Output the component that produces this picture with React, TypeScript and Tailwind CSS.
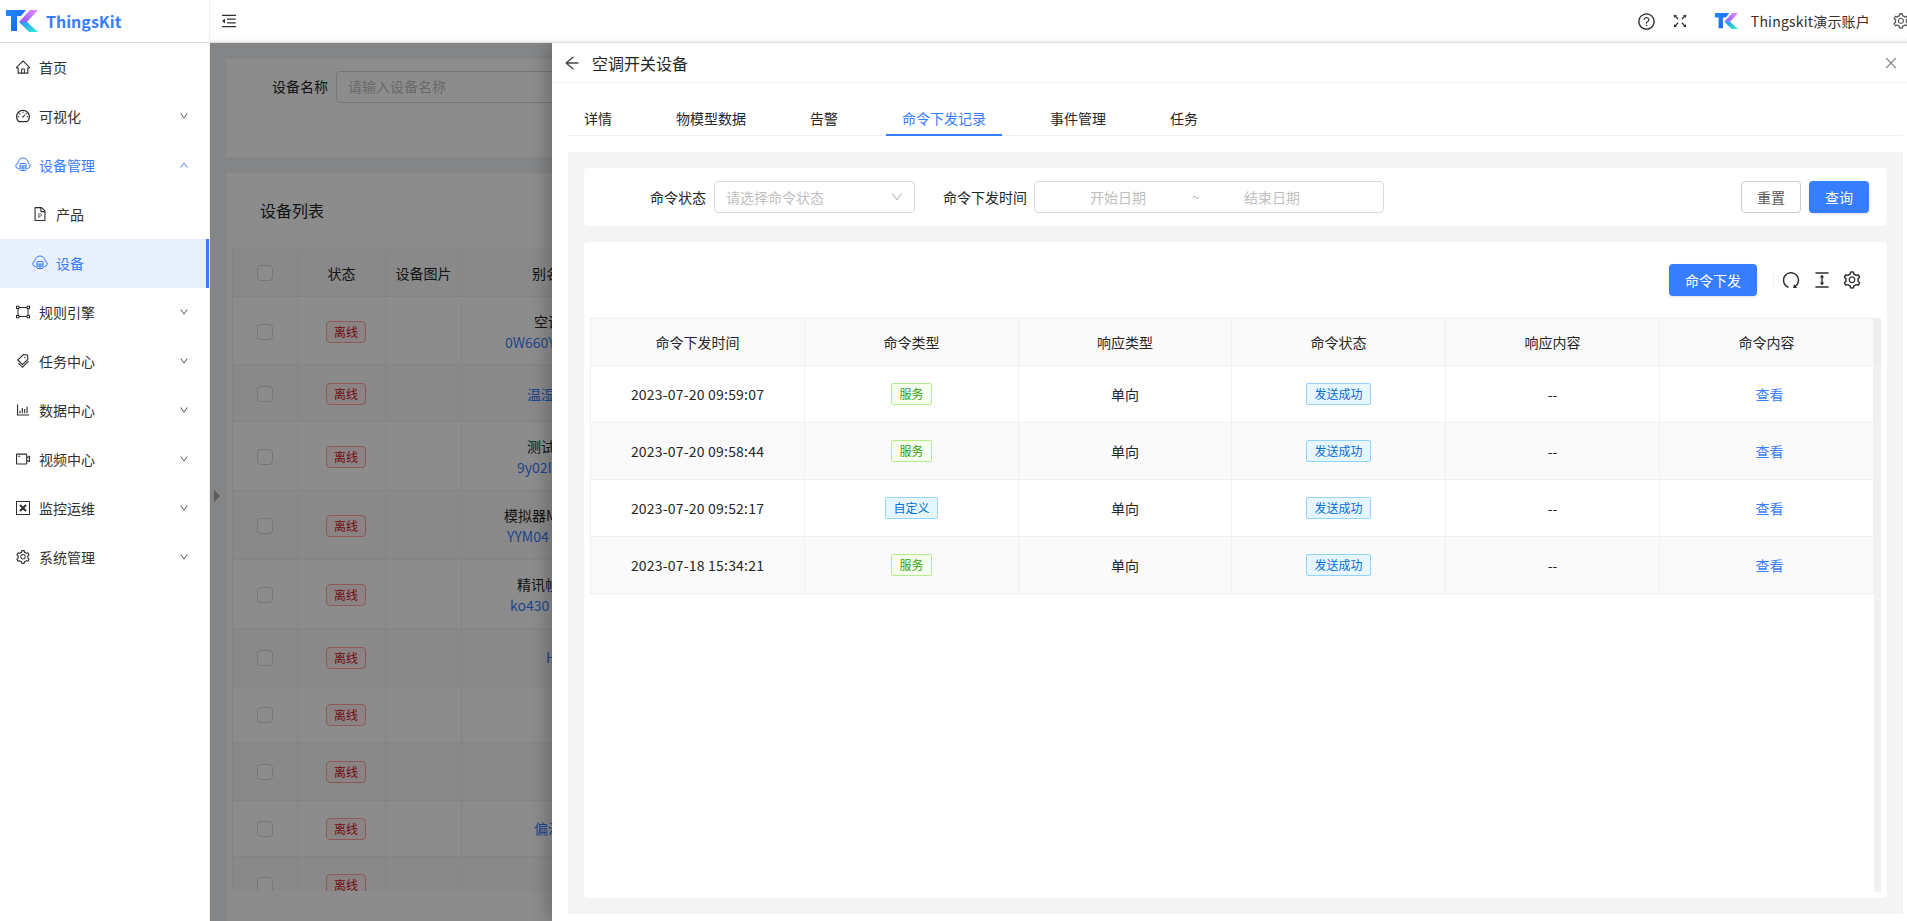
// App.tsx
import React from 'react';
import {
  AiOutlineArrowLeft,
  AiOutlineBarChart,
  AiOutlineClose,
  AiOutlineColumnHeight,
  AiOutlineDashboard,
  AiOutlineDown,
  AiOutlineFilePpt,
  AiOutlineFullscreen,
  AiOutlineHome,
  AiOutlineMenuFold,
  AiOutlineQuestionCircle,
  AiOutlineReload,
  AiOutlineSetting,
  AiOutlineTags,
  AiOutlineUp,
  AiOutlineVideoCamera,
} from 'react-icons/ai';

const Logo = ({ className }: { className: string }) => (
  <svg viewBox="0 0 32 22" className={className}>
    <defs>
      <linearGradient id="tkBlue" x1="0" y1="0" x2="1" y2="1">
        <stop offset="0" stopColor="#1f8bff" />
        <stop offset="1" stopColor="#1a5cff" />
      </linearGradient>
      <linearGradient id="tkPurple" x1="1" y1="0" x2="0" y2="1">
        <stop offset="0" stopColor="#e58cff" />
        <stop offset="1" stopColor="#8a5cff" />
      </linearGradient>
      <linearGradient id="tkTeal" x1="0" y1="0" x2="1" y2="1">
        <stop offset="0" stopColor="#2f8cff" />
        <stop offset="1" stopColor="#2ff0d0" />
      </linearGradient>
    </defs>
    <path d="M0 0H20L15 6H11V21H5V6H0Z" fill="url(#tkBlue)" />
    <path d="M24 0H32L21 12H13Z" fill="url(#tkPurple)" />
    <path d="M13 12H21L32 22H23Z" fill="url(#tkTeal)" />
  </svg>
);

const CloudDevice = ({ className }: { className: string }) => (
  <svg viewBox="0 0 16 16" fill="none" stroke="currentColor" strokeWidth="1" className={className}>
    <path d="M4 11.5H3.2A2.7 2.7 0 0 1 2.8 6.2 5.2 5.2 0 0 1 13.2 6.2 2.7 2.7 0 0 1 12.8 11.5H12" />
    <rect x="5" y="6.5" width="6" height="7" rx="0.6" />
    <path d="M5 9H11M5 11H11M8 9V13.5" />
  </svg>
);

const RuleIcon = ({ className }: { className: string }) => (
  <svg viewBox="0 0 16 16" fill="none" stroke="currentColor" strokeWidth="1" className={className}>
    <path d="M3 3.5H13M3 12.5H13M3 3.5V12.5M13 3.5V12.5" />
    <rect x="1.5" y="2.2" width="2.4" height="2.4" fill="white" />
    <rect x="12.1" y="2.2" width="2.4" height="2.4" fill="white" />
    <rect x="1.5" y="11.4" width="2.4" height="2.4" fill="white" />
    <rect x="12.1" y="11.4" width="2.4" height="2.4" fill="white" />
  </svg>
);

const MonitorIcon = ({ className }: { className: string }) => (
  <svg viewBox="0 0 16 16" fill="none" stroke="currentColor" className={className}>
    <rect x="1.5" y="1.5" width="13" height="13" strokeWidth="1" />
    <path d="M5 5L11 11M11 5L5 11" strokeWidth="2" />
  </svg>
);

const menu = [
  { label: '首页', icon: <AiOutlineHome className="w-4 h-4" /> },
  { label: '可视化', icon: <AiOutlineDashboard className="w-4 h-4" />, arrow: true },
  {
    label: '设备管理',
    icon: <CloudDevice className="w-4 h-4" />,
    arrow: true,
    open: true,
  },
  { label: '产品', icon: <AiOutlineFilePpt className="w-4 h-4" />, sub: true },
  { label: '设备', icon: <CloudDevice className="w-4 h-4" />, sub: true, active: true },
  { label: '规则引擎', icon: <RuleIcon className="w-4 h-4" />, arrow: true },
  { label: '任务中心', icon: <AiOutlineTags className="w-4 h-4" />, arrow: true },
  { label: '数据中心', icon: <AiOutlineBarChart className="w-4 h-4" />, arrow: true },
  { label: '视频中心', icon: <AiOutlineVideoCamera className="w-4 h-4" />, arrow: true },
  { label: '监控运维', icon: <MonitorIcon className="w-4 h-4" />, arrow: true },
  { label: '系统管理', icon: <AiOutlineSetting className="w-4 h-4" />, arrow: true },
];

const Sidebar = () => (
  <aside className="w-[210px] shrink-0 flex flex-col bg-white border-r border-[#eeeeee]">
    <div className="h-[43px] flex items-center pl-[6px] gap-2 border-b border-[#dddddd]">
      <Logo className="w-[32px] h-[22px]" />
      <span className="text-base font-bold text-[#377dff]">ThingsKit</span>
    </div>
    {menu.map((m) => (
      <div
        key={m.label}
        className={
          'h-[49px] pb-[2px] flex items-center text-sm ' +
          (m.sub ? 'pl-[32px] gap-[8px] ' : 'pl-[15px] gap-[8px] ') +
          (m.active ? 'bg-[#e8f0fe] border-r-[3px] border-[#377dff] ' : '') +
          (m.active || m.open ? 'text-[#377dff]' : 'text-[#303030]')
        }
      >
        {m.icon}
        <span>{m.label}</span>
        {m.arrow && (
          <span className="ml-auto mr-[20px]">
            {m.open ? <AiOutlineUp className="w-[10px] h-[10px]" /> : <AiOutlineDown className="w-[10px] h-[10px]" />}
          </span>
        )}
      </div>
    ))}
  </aside>
);

const Header = () => (
  <header className="h-[43px] shrink-0 flex items-center bg-white border-b border-[#dddddd] shadow-[inset_0_-4px_4px_-4px_rgba(0,0,0,0.15)] text-[#303030]">
    <AiOutlineMenuFold className="ml-[10px] w-[18px] h-[18px]" />
    <AiOutlineQuestionCircle className="ml-auto w-[19px] h-[19px]" />
    <AiOutlineFullscreen className="ml-[15px] w-[18px] h-[18px]" />
    <Logo className="ml-[26px] w-[23px] h-[16px]" />
    <span className="ml-[13px] text-sm tracking-[0.2px]">Thingskit演示账户</span>
    <AiOutlineSetting className="ml-[22px] -mr-[3px] w-[18px] h-[18px] shrink-0 text-[#555555]" />
  </header>
);

const bgRows = [
  { h: 'h-[68px] pt-[2px]', top: '空调', pad: 'pl-[72px]', code: '0W660Y', codePad: 'pl-[43px]' },
  { h: 'h-[57px] pt-[2px]', code: '温湿', codePad: 'pl-[65px]' },
  { h: 'h-[69px] pt-[2px]', top: '测试', pad: 'pl-[65px]', code: '9y02I', codePad: 'pl-[55px]' },
  { h: 'h-[69px] pt-[2px]', top: '模拟器M', pad: 'pl-[42px]', code: 'YYM04', codePad: 'pl-[45px]' },
  { h: 'h-[69px] pt-[2px]', top: '精讯帧', pad: 'pl-[55px]', code: 'ko430', codePad: 'pl-[48px]' },
  { h: 'h-[58px]', code: 'H', codePad: 'pl-[84px]' },
  { h: 'h-[56px]' },
  { h: 'h-[58px]' },
  { h: 'h-[56px]', code: '偏温', codePad: 'pl-[72px]' },
  { h: 'h-[56px]' },
];

const Checkbox = () => <span className="w-4 h-4 rounded-sm border border-[#d9d9d9] bg-white" />;

const DeviceBackground = () => (
  <div className="h-full flex flex-col pl-4 pt-4 gap-4 text-sm text-[#262626]">
    <div className="h-[98px] shrink-0 bg-white flex items-start pt-3 pl-[46px]">
      <span className="leading-[31px]">设备名称</span>
      <div className="ml-2 w-[400px] h-8 border border-[#d9d9d9] rounded-sm pl-[11px] leading-[29px] text-[#bfbfbf]">
        请输入设备名称
      </div>
    </div>
    <div className="flex-1 bg-white pl-[6px] min-h-0">
      <div className="h-[76px] pl-[28px] pt-[25px] text-base leading-6">设备列表</div>
      <div className="h-[642px] overflow-hidden border-l border-t border-[#f0f0f0]">
        <div className="h-[47px] flex bg-[#fafafa] border-b border-[#f0f0f0]">
          <div className="w-[65px] flex items-center justify-center border-r border-[#f0f0f0]">
            <Checkbox />
          </div>
          <div className="w-[88px] flex items-center justify-center border-r border-[#f0f0f0]">状态</div>
          <div className="w-[76px] flex items-center justify-center border-r border-[#f0f0f0]">设备图片</div>
          <div className="w-[100px] flex items-center pl-[70px] whitespace-nowrap">别名</div>
        </div>
        {bgRows.map((r, i) => (
          <div key={i} className={'flex border-b border-[#f0f0f0] ' + r.h + (i % 2 ? ' bg-[#fafafa]' : ' bg-white')}>
            <div className="w-[65px] flex items-center justify-center border-r border-[#f0f0f0]">
              <Checkbox />
            </div>
            <div className="w-[88px] flex items-center justify-center pl-[9px] border-r border-[#f0f0f0]">
              <span className="w-10 h-[22px] rounded-sm border border-[#ffa39e] bg-[#fff1f0] text-[#cf1322] text-xs flex items-center justify-center">
                离线
              </span>
            </div>
            <div className="w-[76px] border-r border-[#f0f0f0]" />
            <div className="w-[200px] flex flex-col justify-center leading-[21px] whitespace-nowrap">
              {r.top && <div className={r.pad}>{r.top}</div>}
              {r.code && <div className={r.codePad + ' text-[#377dff]'}>{r.code}</div>}
            </div>
          </div>
        ))}
      </div>
    </div>
  </div>
);

const tabs = ['详情', '物模型数据', '告警', '命令下发记录', '事件管理', '任务'];

const records = [
  { time: '2023-07-20 09:59:07', type: '服务' },
  { time: '2023-07-20 09:58:44', type: '服务' },
  { time: '2023-07-20 09:52:17', type: '自定义' },
  { time: '2023-07-18 15:34:21', type: '服务' },
];

const columns = ['命令下发时间', '命令类型', '响应类型', '命令状态', '响应内容', '命令内容'];

const Tag = ({ text, green }: { text: string; green?: boolean }) => (
  <span
    className={
      'h-[22px] px-[7px] rounded-[2px] border text-xs flex items-center ' +
      (green ? 'border-[#b7eb8f] bg-[#f6ffed] text-[#389e0d]' : 'border-[#91d5ff] bg-[#e6f7ff] text-[#096dd9]')
    }
  >
    {text}
  </span>
);

const cell = 'flex items-center justify-center border-r border-[#f0f0f0]';

const Drawer = () => (
  <section className="absolute right-0 top-0 bottom-0 w-[1355px] flex flex-col bg-white shadow-[-6px_0_16px_rgba(0,0,0,0.2)] text-sm text-[#262626]">
    <div className="h-[40px] shrink-0 flex items-center border-b border-[#f0f0f0] pl-[11px] pr-[8px]">
      <AiOutlineArrowLeft className="w-[18px] h-[18px] text-[#444444]" />
      <span className="ml-[11px] text-base">空调开关设备</span>
      <AiOutlineClose className="ml-auto w-4 h-4 text-[#8c8c8c]" />
    </div>
    <div className="flex-1 flex flex-col pl-4 pr-1 pb-[7px] min-h-0">
      <div className="h-[53px] shrink-0 flex border-b border-[#f0f0f0]">
        {tabs.map((t, i) => (
          <div
            key={t}
            className={
              'px-4 mr-8 pt-[24px] leading-[22px] -mb-px ' +
              (i === 3 ? 'text-[#377dff] border-b-2 border-[#377dff]' : '')
            }
          >
            {t}
          </div>
        ))}
      </div>
      <div className="mt-4 flex-1 min-h-0 flex flex-col gap-4 p-4 bg-[#f4f4f4]">
        <div className="h-[58px] shrink-0 bg-white rounded-sm flex items-center pl-[66px] pr-[18px]">
          <span>命令状态</span>
          <div className="ml-2 w-[201px] h-8 border border-[#d9d9d9] rounded-sm flex items-center pl-[11px] pr-[10px] text-[#bfbfbf]">
            <span>请选择命令状态</span>
            <AiOutlineDown className="ml-auto w-[14px] h-[14px]" />
          </div>
          <span className="ml-[28px]">命令下发时间</span>
          <div className="ml-[7px] w-[350px] h-8 border border-[#d9d9d9] rounded-sm flex items-center pl-[9px] text-[#bfbfbf]">
            <span className="w-[148px] text-center">开始日期</span>
            <span className="w-[6px] text-center">~</span>
            <span className="w-[148px] text-center">结束日期</span>
          </div>
          <button className="ml-auto w-[60px] h-8 rounded-sm border border-[#cccccc] text-[#595959]">重置</button>
          <button className="ml-2 w-[60px] h-8 rounded-sm bg-[#377dff] text-white shadow-sm">查询</button>
        </div>
        <div className="flex-1 min-h-0 bg-white rounded-sm px-[6px] flex flex-col">
          <div className="h-[76px] shrink-0 flex items-center justify-end pr-[19px]">
            <button className="w-[88px] h-8 rounded-sm bg-[#377dff] text-white shadow-sm">命令下发</button>
            <span className="ml-4 w-px h-[14px] bg-[#eeeeee]" />
            <AiOutlineReload className="ml-[7px] w-5 h-5 rotate-90 text-[#303030]" />
            <AiOutlineColumnHeight className="ml-[11px] w-5 h-5 text-[#303030]" />
            <AiOutlineSetting className="ml-[10px] w-5 h-5 text-[#303030]" />
          </div>
          <div className="w-[1291px] grid grid-cols-[215px_214px_213px_214px_214px_214px_7px] border-t border-[#f0f0f0] h-[48px] shrink-0">
            {columns.map((c, i) => (
              <div key={c} className={cell + ' bg-[#fafafa] border-b ' + (i === 0 ? 'border-l' : '')}>
                {c}
              </div>
            ))}
            <div className="bg-[#ededed] border-b border-[#f0f0f0]" />
          </div>
          <div className="w-[1291px] flex flex-1 min-h-0 mb-[6px]">
            <div className="flex-1">
              {records.map((r, i) => (
                <div
                  key={r.time}
                  className={
                    'h-[57px] grid grid-cols-[215px_214px_213px_214px_214px_214px] border-b border-[#f0f0f0] ' +
                    (i % 2 ? 'bg-[#fafafa]' : 'bg-white')
                  }
                >
                  <div className={cell + ' border-l tracking-[0.2px]'}>{r.time}</div>
                  <div className={cell}>
                    <Tag text={r.type} green={r.type === '服务'} />
                  </div>
                  <div className={cell}>单向</div>
                  <div className={cell}>
                    <Tag text="发送成功" />
                  </div>
                  <div className={cell}>--</div>
                  <div className={cell + ' pl-[6px] text-[#377dff]'}>查看</div>
                </div>
              ))}
            </div>
            <div className="w-[7px] bg-[#f1f1f1]" />
          </div>
        </div>
      </div>
    </div>
  </section>
);

const App = () => (
  <div className="w-[1907px] h-[921px] flex overflow-hidden bg-white font-['Noto_Sans_CJK_SC','Noto_Sans',sans-serif]">
    <Sidebar />
    <main className="flex-1 min-w-0 flex flex-col">
      <Header />
      <div className="relative flex-1 min-h-0 overflow-hidden bg-[#f0f2f5]">
        <DeviceBackground />
        {/* collapse handle between the menu and the page */}
        <span className="absolute left-[4px] top-[447px] border-y-[6px] border-y-transparent border-l-[6px] border-l-[#aaaaaa]" />
        <div className="absolute inset-0 bg-black/45" />
        <Drawer />
      </div>
    </main>
  </div>
);

export default App;
